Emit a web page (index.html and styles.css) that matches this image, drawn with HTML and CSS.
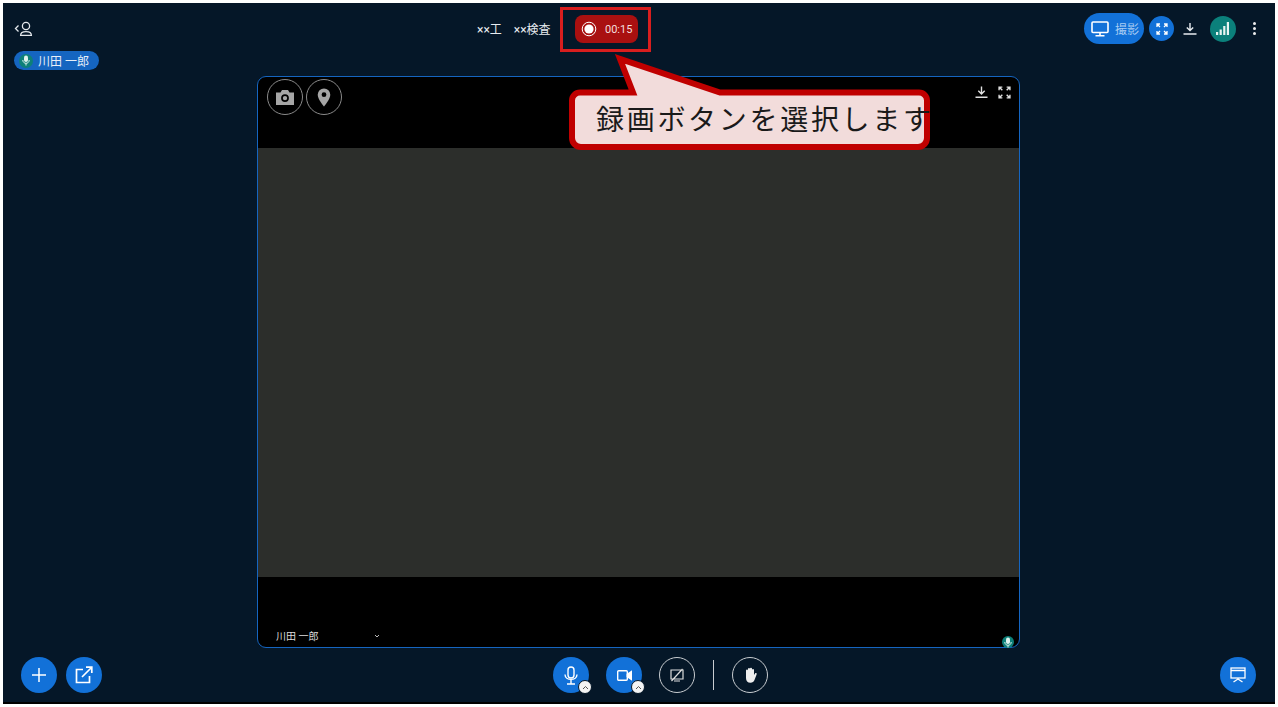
FILE: index.html
```html
<!DOCTYPE html>
<html lang="ja">
<head>
    <meta charset="UTF-8">
    <title>録画</title>
    <link rel="stylesheet" href="styles.css">
</head>
<body>
    <div class="app">
        <header class="top">
            <div class="top-left">
                <div class="back">
                    <svg width="20" height="16" viewBox="0 0 20 16" fill="none" stroke="#e4e8ec" stroke-width="1.3">
                        <path d="M4.5 4.5 1.5 7.5l3 3"/>
                        <circle cx="12" cy="5" r="3.6"/>
                        <path d="M6.6 14.4c0-5 10.8-5 10.8 0z"/>
                    </svg>
                </div>
                <div class="chip">
                    <span class="mic-dot">
                        <svg width="8" height="11" viewBox="0 0 8 11"><rect x="2" y="0.5" width="4" height="6.5" rx="2" fill="#dff3ef"/><path d="M.8 5c0 4.4 6.4 4.4 6.4 0M4 8.5v2" fill="none" stroke="#dff3ef"/></svg>
                    </span>
                    川田 一郎
                </div>
            </div>
            <div class="titles">
                <span>××工</span>
                <span>××検査</span>
            </div>
            <div class="rec">
                <svg width="16" height="16" viewBox="0 0 16 16"><circle cx="8" cy="8" r="6.8" fill="none" stroke="#fff" stroke-width="1"/><circle cx="8" cy="8" r="4.6" fill="#fff"/></svg>
                <span>00:15</span>
            </div>
            <div class="top-right">
                <div class="shoot">
                    <svg width="18" height="16" viewBox="0 0 18 16" fill="none" stroke="#fff" stroke-width="1.6">
                        <rect x="1" y="1" width="16" height="10.5" rx="1"/>
                        <path d="M9 11.5v3M4.5 14.8h9"/>
                    </svg>
                    <span>撮影</span>
                </div>
                <div class="expand">
                    <svg width="12" height="12" viewBox="0 0 12 12" fill="none" stroke="#fff" stroke-width="1.3">
                        <path d="M1 4V1h3M1 1l3 3M8 1h3v3M11 1 8 4M1 8v3h3M1 11l3-3M8 11h3V8M11 11 8 8"/>
                    </svg>
                </div>
                <svg class="dl" width="14" height="13" viewBox="0 0 14 13" fill="none" stroke="#e8ecf0" stroke-width="1.4">
                    <path d="M7 1v7M3.8 5.4 7 8.6l3.2-3.2M.5 12h13"/>
                </svg>
                <div class="signal">
                    <svg width="14" height="13" viewBox="0 0 14 13" fill="#e8f4f2"><rect x="0" y="10" width="2.2" height="3"/><rect x="3.6" y="7.5" width="2.2" height="5.5"/><rect x="7.2" y="4" width="2.2" height="9"/><rect x="10.8" y="0" width="2.2" height="13"/></svg>
                </div>
                <div class="dots"><i></i><i></i><i></i></div>
            </div>
        </header>

        <main class="stage">
            <div class="stage-head">
                <div class="round-tools">
                    <div class="ring">
                        <svg width="20" height="17" viewBox="0 0 20 17" fill="#a6a6a6"><path d="M1 3.5h4.5L7 1h6l1.5 2.5H19V16H1zM10 5.2a3.9 3.9 0 1 0 0 7.8 3.9 3.9 0 0 0 0-7.8z" fill-rule="evenodd"/><circle cx="10" cy="9.1" r="2.2"/></svg>
                    </div>
                    <div class="ring">
                        <svg width="14" height="19" viewBox="0 0 14 19" fill="#a6a6a6"><path d="M7 .5A6.3 6.3 0 0 0 .7 6.8C.7 11.5 7 18.5 7 18.5s6.300-7 6.300-11.700A6.300 6.300 0 0 0 7 .5zm0 8.600a2.400 2.400 0 1 1 0-4.800 2.400 2.400 0 0 1 0 4.800z"/></svg>
                    </div>
                </div>
                <div class="stage-tools">
                    <svg width="13" height="12" viewBox="0 0 13 12" fill="none" stroke="#e0e0e0" stroke-width="1.4"><path d="M6.500 .5v7M3.300 4.800l3.200 3.200 3.200-3.200M.5 11.200h12"/></svg>
                    <svg width="13" height="13" viewBox="0 0 12 12" fill="none" stroke="#e0e0e0" stroke-width="1.300"><path d="M1 4V1h3M1 1l3 3M8 1h3v3M11 1 8 4M1 8v3h3M1 11l3-3M8 11h3V8M11 11 8 8"/></svg>
                </div>
            </div>
            <div class="stage-view"></div>
            <div class="stage-foot">
                <span class="who">川田 一郎</span>
                <svg class="who-caret" width="6" height="4" viewBox="0 0 6 4" fill="none" stroke="#bbb"><path d="M1 1l2 2 2-2"/></svg>
            </div>
            <span class="mic-dot stage-mic">
                <svg width="8" height="11" viewBox="0 0 8 11"><rect x="2" y="0.500" width="4" height="6.500" rx="2" fill="#dff3ef"/><path d="M.8 5c0 4.400 6.400 4.400 6.400 0M4 8.500v2" fill="none" stroke="#dff3ef"/></svg>
            </span>
        </main>

        <footer class="bottom">
            <div class="bottom-left">
                <div class="btn">
                    <svg width="16" height="16" viewBox="0 0 16 16" stroke="#fff" stroke-width="1.500"><path d="M8 1v14M1 8h14"/></svg>
                </div>
                <div class="btn">
                    <svg width="18" height="18" viewBox="0 0 18 18" fill="none" stroke="#fff" stroke-width="1.700"><path d="M8 3.500H1.500v13h13V10M7 11 16.500 1.500M11 1.200h5.800V7"/></svg>
                </div>
            </div>
            <div class="bottom-mid">
                <div class="btn has-caret">
                    <svg width="14" height="19" viewBox="0 0 14 19" fill="none" stroke="#fff" stroke-width="1.400"><rect x="4" y="1" width="6" height="11" rx="3"/><path d="M1 8.500c0 6.500 12 6.500 12 0M7 14v3.500M3 18h8"/></svg>
                    <span class="caret"><svg width="7" height="5" viewBox="0 0 7 5" fill="none" stroke="#555"><path d="M1 4l2.500-2.500L6 4"/></svg></span>
                </div>
                <div class="btn has-caret">
                    <svg width="15" height="11" viewBox="0 0 15 11" fill="none" stroke="#fff" stroke-width="1.400"><rect x=".7" y=".7" width="9.600" height="9.600" rx="1"/><path d="M10.300 4.300 14.300 1.500v8l-4-2.800z" fill="#fff"/></svg>
                    <span class="caret"><svg width="7" height="5" viewBox="0 0 7 5" fill="none" stroke="#555"><path d="M1 4l2.500-2.500L6 4"/></svg></span>
                </div>
                <div class="btn outline">
                    <svg width="14" height="14" viewBox="0 0 14 14" fill="none" stroke="#ddd" stroke-width="1.200"><path d="M1 2h12v9H1zM4 13h6M1.500 13 12.500 1"/></svg>
                </div>
                <div class="sep"></div>
                <div class="btn outline">
                    <svg width="15" height="16" viewBox="0 0 15 16" fill="#eee"><path d="M3 8V3.500a1 1 0 0 1 2 0V2a1 1 0 0 1 2 0v-.2a1 1 0 0 1 2 0V3a1 1 0 0 1 2 0v5l1-1.500c.8-1 2.200-.2 1.600.9L11.500 13c-.8 1.700-2 2.700-4 2.700C4.500 15.700 3 14 3 11z"/></svg>
                </div>
            </div>
            <div class="bottom-right">
                <div class="btn">
                    <svg width="16" height="16" viewBox="0 0 16 16" fill="none" stroke="#fff" stroke-width="1.300"><rect x="1" y="1" width="14" height="10"/><path d="M1 3.500h14M8 11v1.500M8 12 3.500 15M8 12l4.500 3"/></svg>
                </div>
            </div>
        </footer>

        <div class="mark"></div>
        <svg class="bubble-shape" width="368" height="100" viewBox="566 53 368 100">
            <path d="M580 92.500H633L620 59 720 92.500H919a8 8 0 0 1 8 8V138a9 9 0 0 1-9 9H581a9 9 0 0 1-9-9V100.500a8 8 0 0 1 8-8z" fill="#f2dcdb" stroke="#c00000" stroke-width="6" stroke-linejoin="miter"/>
        </svg>
        <div class="bubble-text">録画ボタンを選択します</div>
    </div>
</body>
</html>
```
FILE: styles.css
```css
html, body{
    height: 100%;
}
body{
    margin: 0;
    padding: 3px;
    box-sizing: border-box;
    overflow: hidden;
    background-color: #ffffff;
    font-family: Roboto, "Noto Sans CJK JP", sans-serif;
}

.app{
    position: relative;
    display: flex;
    flex-direction: column;
    height: 100%;
    background-color: #051728;
    border-bottom: 2px solid #000000;
    box-sizing: border-box;
}

/* top bar */
.top{
    display: flex;
    align-items: flex-start;
    height: 73px;
    flex-shrink: 0;
    color: #e8ecf0;
}
.top-left{
    width: 474px;
    padding: 18px 0 0 11px;
    box-sizing: border-box;
}
.back{
    height: 16px;
}
.back svg{
    display: block;
}
.chip{
    display: flex;
    align-items: center;
    gap: 5px;
    width: 85px;
    height: 19px;
    margin-top: 14px;
    padding-left: 5px;
    box-sizing: border-box;
    border-radius: 10px;
    background-color: #1565c0;
    font-size: 12px;
    color: #e6eef8;
    white-space: nowrap;
}
.mic-dot{
    display: flex;
    align-items: center;
    justify-content: center;
    width: 14px;
    height: 14px;
    flex-shrink: 0;
    border-radius: 50%;
    background-color: #0d8079;
}
.titles{
    display: flex;
    gap: 12px;
    width: 98px;
    padding-top: 18px;
    font-size: 12px;
    line-height: 18px;
}
.rec{
    display: flex;
    align-items: center;
    gap: 8px;
    width: 63px;
    height: 28px;
    margin-top: 12px;
    padding-left: 6px;
    box-sizing: border-box;
    border-radius: 8px;
    background-color: #a91010;
    font-size: 11px;
    color: #f2dede;
}
.top-right{
    display: flex;
    align-items: center;
    margin-left: auto;
    height: 31px;
    margin-top: 10px;
    padding-right: 19px;
}
.shoot{
    display: flex;
    align-items: center;
    gap: 6px;
    width: 60px;
    height: 31px;
    padding-left: 7px;
    box-sizing: border-box;
    border-radius: 16px;
    background-color: #1271d8;
    font-size: 12px;
    color: #a9cdf3;
}
.expand{
    display: flex;
    align-items: center;
    justify-content: center;
    width: 25px;
    height: 25px;
    margin-left: 5px;
    border-radius: 50%;
    background-color: #1271d8;
}
.dl{
    margin-left: 9px;
}
.signal{
    display: flex;
    align-items: center;
    justify-content: center;
    width: 26px;
    height: 26px;
    margin-left: 13px;
    border-radius: 50%;
    background-color: #0b807b;
}
.dots{
    display: flex;
    flex-direction: column;
    gap: 2px;
    margin-left: 17px;
}
.dots i{
    width: 3px;
    height: 3px;
    border-radius: 50%;
    background-color: #eeeeee;
}

/* video area */
.stage{
    position: relative;
    display: flex;
    flex-direction: column;
    flex: 1;
    width: 763px;
    margin-left: 254px;
    box-sizing: border-box;
    overflow: visible;
    border: 1.5px solid #1565c0;
    border-radius: 9px;
    background-color: #000000;
}
.stage-head{
    display: flex;
    justify-content: space-between;
    height: 71px;
    flex-shrink: 0;
    padding: 2px 8px 0 9px;
    box-sizing: border-box;
}
.round-tools{
    display: flex;
    gap: 3px;
}
.ring{
    display: flex;
    align-items: center;
    justify-content: center;
    width: 36px;
    height: 36px;
    box-sizing: border-box;
    border: 1px solid #8a8a8a;
    border-radius: 50%;
}
.stage-tools{
    display: flex;
    gap: 10px;
    padding-top: 7px;
}
.stage-view{
    flex: 1;
    background-color: #2c2e2b;
}
.stage-foot{
    display: flex;
    align-items: flex-end;
    height: 70px;
    flex-shrink: 0;
    padding: 0 0 3px 18px;
    box-sizing: border-box;
    border-radius: 0 0 8px 8px;
}
.who{
    width: 98px;
    font-size: 10px;
    line-height: 14px;
    color: #dddddd;
}
.who-caret{
    margin-bottom: 6px;
}
.stage-mic{
    position: absolute;
    right: 5px;
    bottom: -1px;
    width: 12px;
    height: 12px;
}

/* bottom bar */
.bottom{
    display: flex;
    align-items: center;
    height: 54px;
    flex-shrink: 0;
}
.bottom-left{
    display: flex;
    gap: 9px;
    width: 532px;
    margin-left: 18px;
}
.bottom-mid{
    display: flex;
    align-items: center;
}
.bottom-mid .btn + .btn{
    margin-left: 17px;
}
.bottom-mid .btn.outline{
    margin-left: 17px;
}
.bottom-right{
    margin-left: auto;
    margin-right: 19px;
}
.btn{
    position: relative;
    display: flex;
    align-items: center;
    justify-content: center;
    width: 36px;
    height: 36px;
    box-sizing: border-box;
    border-radius: 50%;
    background-color: #1271d8;
}
.btn.outline{
    border: 1px solid #c8ccd0;
    background-color: transparent;
}
.caret{
    position: absolute;
    right: -3px;
    bottom: -1px;
    display: flex;
    align-items: center;
    justify-content: center;
    width: 14px;
    height: 14px;
    box-sizing: border-box;
    border: 1px solid #051728;
    border-radius: 50%;
    background-color: #f4f4f4;
}
.sep{
    width: 1px;
    height: 30px;
    margin-left: 18px;
    background-color: #c8ccd0;
}
.sep + .btn.outline{
    margin-left: 18px;
}

/* annotation laid over the page */
.mark{
    position: absolute;
    left: 557px;
    top: 4px;
    width: 91px;
    height: 45px;
    box-sizing: border-box;
    border: 3px solid #d81e1e;
}
.bubble-shape{
    position: absolute;
    left: 563px;
    top: 50px;
}
.bubble-text{
    position: absolute;
    left: 593px;
    top: 93px;
    font-family: "Noto Sans CJK JP", sans-serif;
    font-size: 28px;
    letter-spacing: 2.7px;
    line-height: 44px;
    white-space: nowrap;
    color: #1a1a1a;
}
```
